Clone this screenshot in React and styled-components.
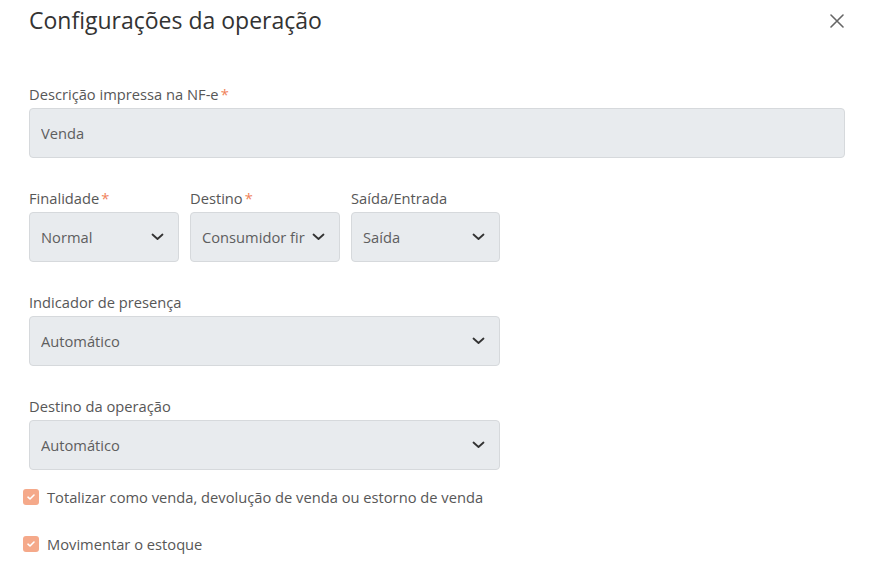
import styled, { createGlobalStyle } from 'styled-components'

const GlobalStyle = createGlobalStyle`
    body {
        margin: 0;
        background: #ffffff;
        font-family: "Open Sans", "Liberation Sans", sans-serif;
        color: #444;
    }
`

const Chevron = () => (
    <svg width="13" height="8" viewBox="0 0 13 8" fill="none">
        <path d="M1.5 1.5L6.5 6L11.5 1.5" stroke="#333" strokeWidth="1.8" strokeLinecap="round" strokeLinejoin="round" />
    </svg>
)

const CloseIcon = () => (
    <svg width="14" height="14" viewBox="0 0 14 14" fill="none">
        <path d="M1 1L13 13M13 1L1 13" stroke="#666" strokeWidth="1.6" strokeLinecap="round" />
    </svg>
)

const Check = () => (
    <svg width="10" height="8" viewBox="0 0 10 8" fill="none">
        <path d="M2 4.2L4 6L8 2" stroke="#fff" strokeWidth="1.6" strokeLinecap="round" strokeLinejoin="round" />
    </svg>
)

const Field = ({ label, required, value, width, select }) => (
    <FieldWrap width={width}>
        <Label>
            {label}
            {required && <Star>*</Star>}
        </Label>
        <Box>
            <Value>{value}</Value>
            {select && <Chevron />}
        </Box>
    </FieldWrap>
)

const App = () => {
    return (
        <Page>
            <GlobalStyle />
            <Header>
                <Title>Configurações da operação</Title>
                <CloseButton><CloseIcon /></CloseButton>
            </Header>
            <Form>
                <Field label="Descrição impressa na NF-e" required value="Venda" />
                <Row>
                    <Field label="Finalidade" required value="Normal" width="150px" select />
                    <Field label="Destino" required value="Consumidor fir" width="150px" select />
                    <Field label="Saída/Entrada" value="Saída" width="149px" select />
                </Row>
                <Field label="Indicador de presença" value="Automático" width="471px" select />
                <Field label="Destino da operação" value="Automático" width="471px" select />
            </Form>
            <Checks>
                <CheckRow>
                    <CheckBox><Check /></CheckBox>
                    Totalizar como venda, devolução de venda ou estorno de venda
                </CheckRow>
                <CheckRow>
                    <CheckBox><Check /></CheckBox>
                    Movimentar o estoque
                </CheckRow>
            </Checks>
        </Page>
    )
}

const Page = styled.div`
    width: 870px;
    height: 573px;
    padding: 0 25px 0 29px;
    box-sizing: border-box;
    overflow: hidden;
`

const Header = styled.div`
    height: 40px;
    display: flex;
    align-items: center;
    justify-content: space-between;
`

const Title = styled.h1`
    margin: 0;
    font-size: 23px;
    font-weight: 400;
    color: #333;
    line-height: 32px;
`

const CloseButton = styled.div`
    width: 16px;
    height: 16px;
    display: flex;
    align-items: center;
    justify-content: center;
    margin-top: 2px;
`

const Form = styled.div`
    display: flex;
    flex-direction: column;
    gap: 30px;
    margin-top: 44px;
`

const Row = styled.div`
    display: flex;
    gap: 11px;
`

const FieldWrap = styled.div`
    width: ${p => p.width || '100%'};
    display: flex;
    flex-direction: column;
    gap: 4px;
`

const Label = styled.div`
    font-size: 14.7px;
    line-height: 20px;
    color: #575757;
`

const Star = styled.span`
    color: #f0825a;
    margin-left: 2px;
`

const Box = styled.div`
    height: 50px;
    box-sizing: border-box;
    background: #e8ebee;
    border: 1px solid #d6d9dc;
    border-radius: 4px;
    padding: 0 14px 0 11px;
    display: flex;
    align-items: center;
    gap: 6px;
    svg {
        flex-shrink: 0;
    }
`

const Value = styled.div`
    flex: 1;
    font-size: 14.7px;
    color: #5e5e5e;
    white-space: nowrap;
    overflow: hidden;
`

const Checks = styled.div`
    display: flex;
    flex-direction: column;
    gap: 27px;
    margin-top: 17px;
    margin-left: -6px;
`

const CheckRow = styled.label`
    display: flex;
    align-items: center;
    gap: 8px;
    font-size: 14.7px;
    line-height: 20px;
    color: #575757;
`

const CheckBox = styled.span`
    width: 16px;
    height: 16px;
    border-radius: 3px;
    background: #f5a98a;
    display: flex;
    align-items: center;
    justify-content: center;
`

export default App
